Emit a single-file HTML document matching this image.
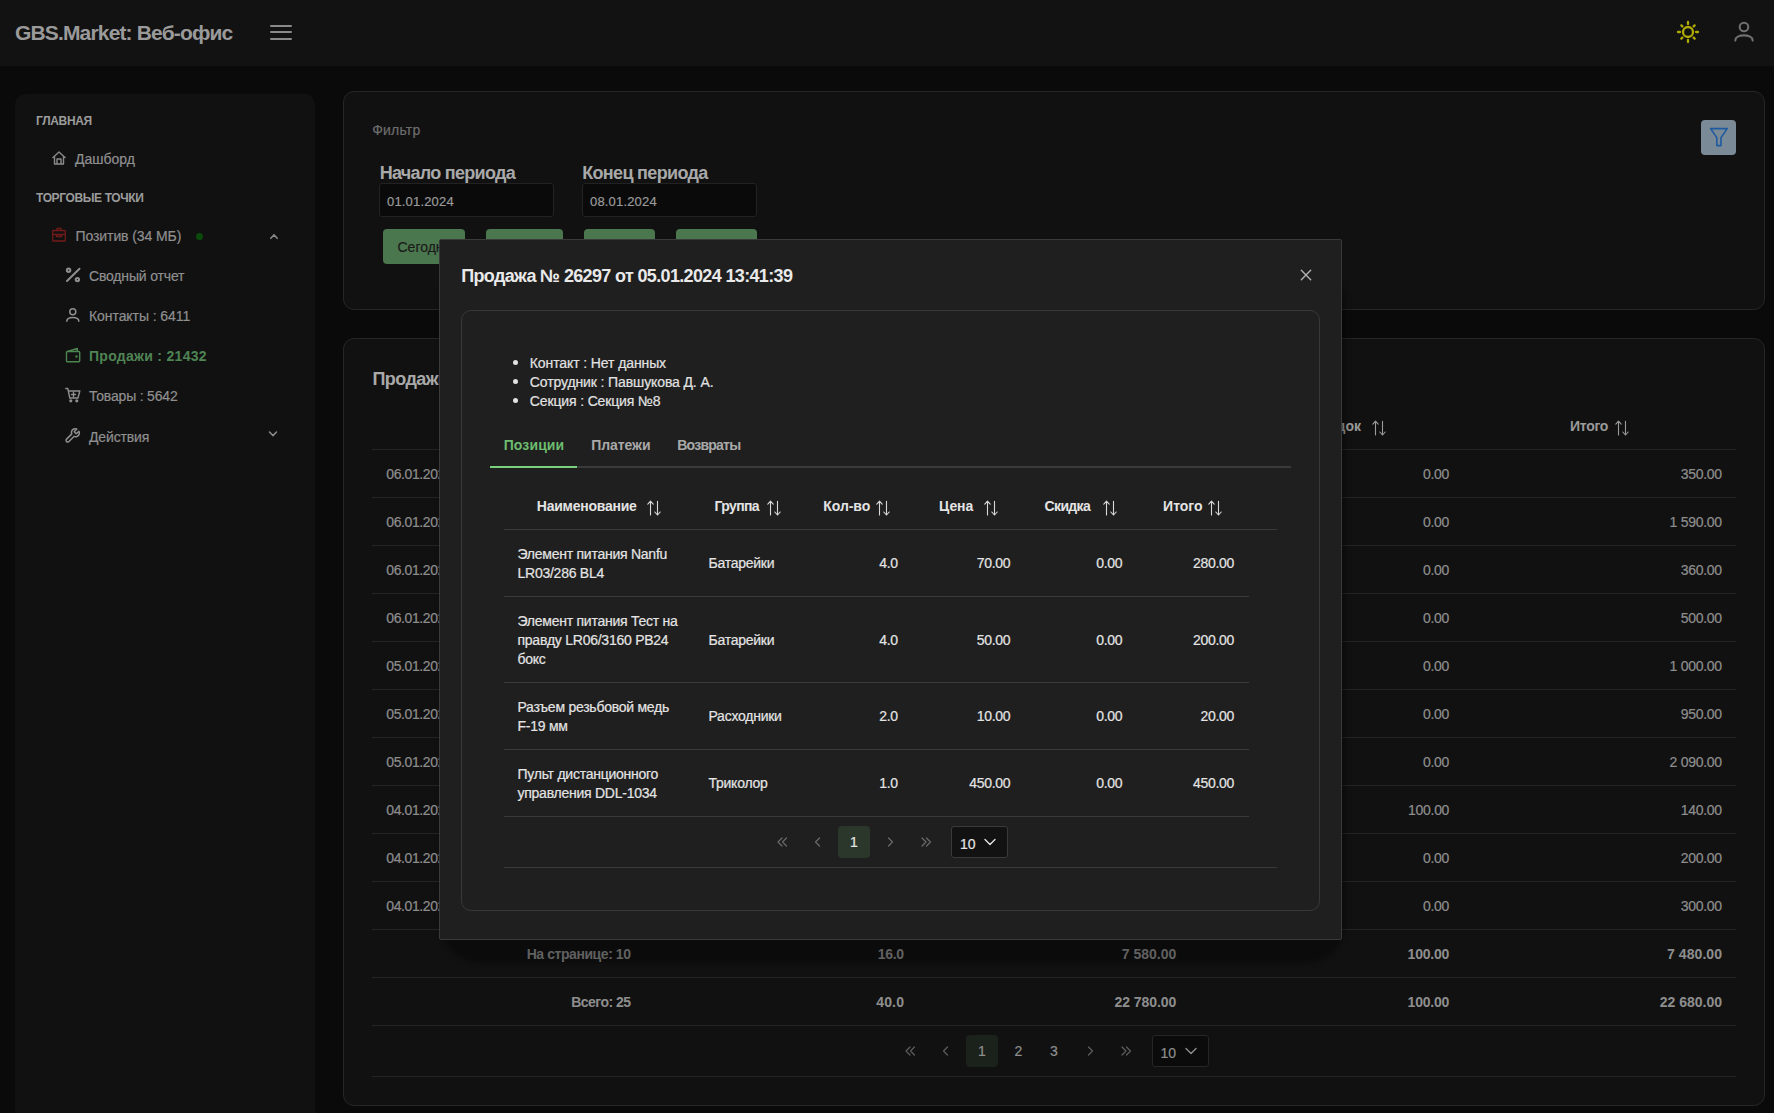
<!DOCTYPE html>
<html><head><meta charset="utf-8"><style>
html,body{margin:0;padding:0;}
body{width:1774px;height:1113px;overflow:hidden;background:#0a0a0a;position:relative;font-family:"Liberation Sans", sans-serif;}
.t{position:absolute;white-space:nowrap;line-height:1;}
.r{-webkit-text-stroke:0.2px currentColor;}
svg{overflow:visible;}
</style></head><body>
<div style="position:absolute;left:0px;top:0px;width:1774px;height:66px;background:#121212;"></div><div class="t" style="top:22.42px;font-size:21px;color:#9a9a9a;font-weight:700;letter-spacing:-0.842px;left:15px;">GBS.Market: Веб-офис</div><div style="position:absolute;left:270px;top:24.5px;width:22px;height:2px;background:#8a8a8a;border-radius:1px;"></div><div style="position:absolute;left:270px;top:31px;width:22px;height:2px;background:#8a8a8a;border-radius:1px;"></div><div style="position:absolute;left:270px;top:37.5px;width:22px;height:2px;background:#8a8a8a;border-radius:1px;"></div><svg style="position:absolute;left:1676px;top:19.7px;" width="24" height="24" viewBox="0 0 24 24" fill="none"><g stroke="#b0ab00" stroke-width="2.3" stroke-linecap="round"><circle cx="12" cy="12" r="5.0"/><line x1="20.00" y1="12.00" x2="22.00" y2="12.00"/><line x1="17.66" y1="17.66" x2="18.65" y2="18.65"/><line x1="12.00" y1="20.00" x2="12.00" y2="22.00"/><line x1="6.34" y1="17.66" x2="5.35" y2="18.65"/><line x1="4.00" y1="12.00" x2="2.00" y2="12.00"/><line x1="6.34" y1="6.34" x2="5.35" y2="5.35"/><line x1="12.00" y1="4.00" x2="12.00" y2="2.00"/><line x1="17.66" y1="6.34" x2="18.65" y2="5.35"/></g></svg><svg style="position:absolute;left:1732px;top:19px;" width="24" height="24" viewBox="0 0 24 24" fill="none"><g stroke="#6f6f6f" stroke-width="2.1" stroke-linecap="round"><circle cx="12" cy="8" r="4.3"/><path d="M3.3 21.6 C3.3 14.6 20.7 14.6 20.7 21.6"/></g></svg><div style="position:absolute;left:15px;top:94px;width:300px;height:1040px;background:#111111;border-radius:10px;"></div><div class="t" style="top:114.84px;font-size:12px;color:#9c9c9c;font-weight:700;letter-spacing:-0.333px;left:36px;">ГЛАВНАЯ</div><div class="t" style="top:191.84px;font-size:12px;color:#9c9c9c;font-weight:700;letter-spacing:-0.385px;left:36px;">ТОРГОВЫЕ ТОЧКИ</div><div class="t r" style="top:151.85px;font-size:14px;color:#8f8f8f;font-weight:400;left:75px;">Дашборд</div><div class="t r" style="top:228.95px;font-size:14px;color:#8f8f8f;font-weight:400;letter-spacing:-0.093px;left:75.5px;">Позитив (34 МБ)</div><div class="t r" style="top:269.25px;font-size:14px;color:#8f8f8f;font-weight:400;letter-spacing:-0.167px;left:89px;">Сводный отчет</div><div class="t r" style="top:309.45px;font-size:14px;color:#8f8f8f;font-weight:400;letter-spacing:-0.071px;left:89px;">Контакты : 6411</div><div class="t" style="top:349.15px;font-size:14px;color:#4f8454;font-weight:700;letter-spacing:0.286px;left:89px;">Продажи : 21432</div><div class="t r" style="top:389.15px;font-size:14px;color:#8f8f8f;font-weight:400;letter-spacing:-0.192px;left:89px;">Товары : 5642</div><div class="t r" style="top:429.65px;font-size:14px;color:#8f8f8f;font-weight:400;letter-spacing:-0.143px;left:89px;">Действия</div><svg style="position:absolute;left:51px;top:150px;" width="16" height="16" viewBox="0 0 16 16" fill="none"><g stroke="#8a8a8a" stroke-width="1.4" stroke-linejoin="round"><path d="M1.5 8 L8 2 L14.5 8 M3.5 6.5 V14 H12.5 V6.5 M6 14 V9 H10 V14"/></g></svg><svg style="position:absolute;left:51px;top:227px;" width="16" height="15" viewBox="0 0 16 15" fill="none"><g stroke="#721a1a" stroke-width="1.3"><rect x="1.7" y="3.5" width="12.6" height="10.5" rx="0.6"/><path d="M6 3.5 V1.3 H10 V3.5 M1.7 7.5 H14.3 M5.5 7.5 V9.5 H10.5 V7.5"/></g></svg><div style="position:absolute;left:196px;top:232.5px;width:7px;height:7px;background:#0a4a0a;border-radius:50%;"></div><svg style="position:absolute;left:266px;top:229px;" width="14" height="12" viewBox="0 0 14 12" fill="none"><path d="M4.8 9.3 L8 6 L11.2 9.3" stroke="#8a8a8a" stroke-width="1.6" stroke-linecap="round"/></svg><svg style="position:absolute;left:65px;top:267px;" width="16" height="16" viewBox="0 0 16 16" fill="none"><g stroke="#8f8f8f" stroke-width="2" stroke-linecap="round"><line x1="2" y1="14" x2="14.5" y2="1.8"/><circle cx="3.6" cy="3.3" r="1.7"/><circle cx="12.4" cy="12.6" r="1.7"/></g></svg><svg style="position:absolute;left:65px;top:307px;" width="16" height="16" viewBox="0 0 16 16" fill="none"><g stroke="#8f8f8f" stroke-width="1.5" stroke-linecap="round"><circle cx="7.8" cy="4.8" r="3"/><path d="M1.8 14.3 C1.8 9.3 13.8 9.3 13.8 14.3"/></g></svg><svg style="position:absolute;left:65px;top:347px;" width="16" height="16" viewBox="0 0 16 16" fill="none"><g stroke="#4d8551" stroke-width="1.4" stroke-linejoin="round"><rect x="1.5" y="4.5" width="13.2" height="10.2" rx="1"/><path d="M2.5 4.5 L12.3 1.5 V4.5"/><circle cx="11.5" cy="9.5" r="0.5" fill="#4d8551"/></g></svg><svg style="position:absolute;left:65px;top:387px;" width="16" height="16" viewBox="0 0 16 16" fill="none"><g stroke="#8f8f8f" stroke-width="1.4" stroke-linejoin="round" stroke-linecap="round"><path d="M0.8 1.5 H2.8 L4.8 11 H13 L14.8 4 H3.5 M8.5 5.5 V9.5 M6.5 7.5 H10.5"/><circle cx="5.8" cy="13.8" r="0.9" fill="#8f8f8f"/><circle cx="11.8" cy="13.8" r="0.9" fill="#8f8f8f"/></g></svg><svg style="position:absolute;left:65px;top:427px;" width="16" height="16" viewBox="0 0 16 16" fill="none"><g stroke="#8f8f8f" stroke-width="1.5" stroke-linejoin="round"><path d="M14 4.2 L11.3 6.8 L9.2 4.7 L11.8 2 C9.8 1.1 7.3 2 6.6 4.2 C6.3 5.2 6.4 6.1 6.8 6.9 L1.6 12.1 C0.9 12.8 0.9 14 1.6 14.6 C2.2 15.2 3.4 15.2 4 14.5 L9.2 9.3 C10 9.7 10.9 9.8 11.9 9.5 C14 8.8 15 6.3 14 4.2 Z"/></g></svg><svg style="position:absolute;left:266px;top:427px;" width="14" height="12" viewBox="0 0 14 12" fill="none"><path d="M3.5 5 L7 8.5 L10.5 5" stroke="#8a8a8a" stroke-width="1.6" stroke-linecap="round"/></svg><div style="position:absolute;left:343px;top:91px;width:1422px;height:219px;background:#111111;border:1px solid #262626;border-radius:11px;box-sizing:border-box;"></div><div class="t r" style="top:123.35px;font-size:14px;color:#6d6d6d;font-weight:400;letter-spacing:0.200px;left:372.2px;">Фильтр</div><div class="t" style="top:163.76px;font-size:18px;color:#a9a9a9;font-weight:700;letter-spacing:-0.723px;left:379.7px;">Начало периода</div><div class="t" style="top:163.76px;font-size:18px;color:#a9a9a9;font-weight:700;letter-spacing:-0.667px;left:582.2px;">Конец периода</div><div style="position:absolute;left:379px;top:183px;width:175px;height:34px;background:#0a0a0a;border:1px solid #222;border-radius:3px;box-sizing:border-box;"></div><div style="position:absolute;left:582px;top:183px;width:175px;height:34px;background:#0a0a0a;border:1px solid #222;border-radius:3px;box-sizing:border-box;"></div><div class="t r" style="top:194.60px;font-size:13px;color:#9a9a9a;font-weight:400;letter-spacing:0.178px;left:387px;">01.01.2024</div><div class="t r" style="top:194.60px;font-size:13px;color:#9a9a9a;font-weight:400;letter-spacing:0.178px;left:590px;">08.01.2024</div><div style="position:absolute;left:383px;top:229px;width:82px;height:35px;background:#4a774d;border-radius:4px;"></div><div style="position:absolute;left:486px;top:229px;width:77px;height:35px;background:#4a774d;border-radius:4px;"></div><div style="position:absolute;left:584px;top:229px;width:71px;height:35px;background:#4a774d;border-radius:4px;"></div><div style="position:absolute;left:676px;top:229px;width:81px;height:35px;background:#4a774d;border-radius:4px;"></div><div class="t r" style="top:240.45px;font-size:14px;color:#1b1b1b;font-weight:400;left:397.5px;">Сегодня</div><div style="position:absolute;left:1701px;top:120px;width:35px;height:35px;background:#7a8a96;border-radius:4px;"></div><svg style="position:absolute;left:1709px;top:127px;" width="20" height="20" viewBox="0 0 20 20" fill="none"><path d="M1.6 1.6 H18.2 L12 10.6 V18.6 H7.8 V10.6 Z" stroke="#1d5aa0" stroke-width="1.6" stroke-linejoin="round"/></svg><div style="position:absolute;left:343px;top:338px;width:1422px;height:768px;background:#111111;border:1px solid #262626;border-radius:11px;box-sizing:border-box;"></div><div class="t" style="top:369.56px;font-size:18px;color:#a9a9a9;font-weight:700;letter-spacing:-0.600px;left:372.5px;">Продажи</div><div class="t" style="top:419.45px;font-size:14px;color:#9a9a9a;font-weight:700;right:413.00px;">...док</div><div class="t" style="top:419.45px;font-size:14px;color:#9a9a9a;font-weight:700;letter-spacing:-0.300px;left:1570px;">Итого</div><svg style="position:absolute;left:1371px;top:420px;" width="15" height="16" viewBox="0 0 15 16" fill="none"><g stroke="#9a9a9a" stroke-width="1.1" stroke-linecap="round" stroke-linejoin="round"><path d="M4.5 15 V1.2 M1.8 4.2 L4.5 1.2 L7.2 4.2 M11.5 1.2 V15 M8.8 12 L11.5 15 L14.2 12"/></g></svg><svg style="position:absolute;left:1614px;top:420px;" width="15" height="16" viewBox="0 0 15 16" fill="none"><g stroke="#9a9a9a" stroke-width="1.1" stroke-linecap="round" stroke-linejoin="round"><path d="M4.5 15 V1.2 M1.8 4.2 L4.5 1.2 L7.2 4.2 M11.5 1.2 V15 M8.8 12 L11.5 15 L14.2 12"/></g></svg><div style="position:absolute;left:372px;top:449px;width:1364px;height:1px;background:#242424;"></div><div style="position:absolute;left:372px;top:497px;width:1364px;height:1px;background:#242424;"></div><div style="position:absolute;left:372px;top:545px;width:1364px;height:1px;background:#242424;"></div><div style="position:absolute;left:372px;top:593px;width:1364px;height:1px;background:#242424;"></div><div style="position:absolute;left:372px;top:641px;width:1364px;height:1px;background:#242424;"></div><div style="position:absolute;left:372px;top:689px;width:1364px;height:1px;background:#242424;"></div><div style="position:absolute;left:372px;top:737px;width:1364px;height:1px;background:#242424;"></div><div style="position:absolute;left:372px;top:785px;width:1364px;height:1px;background:#242424;"></div><div style="position:absolute;left:372px;top:833px;width:1364px;height:1px;background:#242424;"></div><div style="position:absolute;left:372px;top:881px;width:1364px;height:1px;background:#242424;"></div><div style="position:absolute;left:372px;top:929px;width:1364px;height:1px;background:#242424;"></div><div style="position:absolute;left:372px;top:977px;width:1364px;height:1px;background:#242424;"></div><div style="position:absolute;left:372px;top:1025px;width:1364px;height:1px;background:#242424;"></div><div style="position:absolute;left:372px;top:1076px;width:1364px;height:1px;background:#242424;"></div><div class="t r" style="top:467.15px;font-size:14px;color:#8e8e8e;font-weight:400;letter-spacing:-0.400px;left:386.3px;">06.01.2024</div><div class="t r" style="top:467.15px;font-size:14px;color:#8e8e8e;font-weight:400;letter-spacing:-0.300px;right:324.90px;">0.00</div><div class="t r" style="top:467.15px;font-size:14px;color:#8e8e8e;font-weight:400;letter-spacing:-0.300px;right:52.30px;">350.00</div><div class="t r" style="top:515.15px;font-size:14px;color:#8e8e8e;font-weight:400;letter-spacing:-0.400px;left:386.3px;">06.01.2024</div><div class="t r" style="top:515.15px;font-size:14px;color:#8e8e8e;font-weight:400;letter-spacing:-0.300px;right:324.90px;">0.00</div><div class="t r" style="top:515.15px;font-size:14px;color:#8e8e8e;font-weight:400;letter-spacing:-0.300px;right:52.30px;">1 590.00</div><div class="t r" style="top:563.15px;font-size:14px;color:#8e8e8e;font-weight:400;letter-spacing:-0.400px;left:386.3px;">06.01.2024</div><div class="t r" style="top:563.15px;font-size:14px;color:#8e8e8e;font-weight:400;letter-spacing:-0.300px;right:324.90px;">0.00</div><div class="t r" style="top:563.15px;font-size:14px;color:#8e8e8e;font-weight:400;letter-spacing:-0.300px;right:52.30px;">360.00</div><div class="t r" style="top:611.15px;font-size:14px;color:#8e8e8e;font-weight:400;letter-spacing:-0.400px;left:386.3px;">06.01.2024</div><div class="t r" style="top:611.15px;font-size:14px;color:#8e8e8e;font-weight:400;letter-spacing:-0.300px;right:324.90px;">0.00</div><div class="t r" style="top:611.15px;font-size:14px;color:#8e8e8e;font-weight:400;letter-spacing:-0.300px;right:52.30px;">500.00</div><div class="t r" style="top:659.15px;font-size:14px;color:#8e8e8e;font-weight:400;letter-spacing:-0.400px;left:386.3px;">05.01.2024</div><div class="t r" style="top:659.15px;font-size:14px;color:#8e8e8e;font-weight:400;letter-spacing:-0.300px;right:324.90px;">0.00</div><div class="t r" style="top:659.15px;font-size:14px;color:#8e8e8e;font-weight:400;letter-spacing:-0.300px;right:52.30px;">1 000.00</div><div class="t r" style="top:707.15px;font-size:14px;color:#8e8e8e;font-weight:400;letter-spacing:-0.400px;left:386.3px;">05.01.2024</div><div class="t r" style="top:707.15px;font-size:14px;color:#8e8e8e;font-weight:400;letter-spacing:-0.300px;right:324.90px;">0.00</div><div class="t r" style="top:707.15px;font-size:14px;color:#8e8e8e;font-weight:400;letter-spacing:-0.300px;right:52.30px;">950.00</div><div class="t r" style="top:755.15px;font-size:14px;color:#8e8e8e;font-weight:400;letter-spacing:-0.400px;left:386.3px;">05.01.2024</div><div class="t r" style="top:755.15px;font-size:14px;color:#8e8e8e;font-weight:400;letter-spacing:-0.300px;right:324.90px;">0.00</div><div class="t r" style="top:755.15px;font-size:14px;color:#8e8e8e;font-weight:400;letter-spacing:-0.300px;right:52.30px;">2 090.00</div><div class="t r" style="top:803.15px;font-size:14px;color:#8e8e8e;font-weight:400;letter-spacing:-0.400px;left:386.3px;">04.01.2024</div><div class="t r" style="top:803.15px;font-size:14px;color:#8e8e8e;font-weight:400;letter-spacing:-0.300px;right:324.90px;">100.00</div><div class="t r" style="top:803.15px;font-size:14px;color:#8e8e8e;font-weight:400;letter-spacing:-0.300px;right:52.30px;">140.00</div><div class="t r" style="top:851.15px;font-size:14px;color:#8e8e8e;font-weight:400;letter-spacing:-0.400px;left:386.3px;">04.01.2024</div><div class="t r" style="top:851.15px;font-size:14px;color:#8e8e8e;font-weight:400;letter-spacing:-0.300px;right:324.90px;">0.00</div><div class="t r" style="top:851.15px;font-size:14px;color:#8e8e8e;font-weight:400;letter-spacing:-0.300px;right:52.30px;">200.00</div><div class="t r" style="top:899.15px;font-size:14px;color:#8e8e8e;font-weight:400;letter-spacing:-0.400px;left:386.3px;">04.01.2024</div><div class="t r" style="top:899.15px;font-size:14px;color:#8e8e8e;font-weight:400;letter-spacing:-0.300px;right:324.90px;">0.00</div><div class="t r" style="top:899.15px;font-size:14px;color:#8e8e8e;font-weight:400;letter-spacing:-0.300px;right:52.30px;">300.00</div><div class="t" style="top:946.65px;font-size:14px;color:#8e8e8e;font-weight:700;letter-spacing:-0.429px;right:1143.43px;">На странице: 10</div><div class="t" style="top:946.65px;font-size:14px;color:#8e8e8e;font-weight:700;letter-spacing:-0.333px;right:870.33px;">16.0</div><div class="t" style="top:946.65px;font-size:14px;color:#8e8e8e;font-weight:700;right:597.70px;">7 580.00</div><div class="t" style="top:946.65px;font-size:14px;color:#8e8e8e;font-weight:700;letter-spacing:-0.200px;right:324.80px;">100.00</div><div class="t" style="top:946.65px;font-size:14px;color:#8e8e8e;font-weight:700;letter-spacing:0.071px;right:51.93px;">7 480.00</div><div class="t" style="top:994.65px;font-size:14px;color:#8e8e8e;font-weight:700;letter-spacing:-0.537px;right:1143.54px;">Всего: 25</div><div class="t" style="top:994.65px;font-size:14px;color:#8e8e8e;font-weight:700;letter-spacing:0.200px;right:869.80px;">40.0</div><div class="t" style="top:994.65px;font-size:14px;color:#8e8e8e;font-weight:700;letter-spacing:-0.050px;right:597.75px;">22 780.00</div><div class="t" style="top:994.65px;font-size:14px;color:#8e8e8e;font-weight:700;letter-spacing:-0.200px;right:324.80px;">100.00</div><div class="t" style="top:994.65px;font-size:14px;color:#8e8e8e;font-weight:700;right:52.00px;">22 680.00</div><svg style="position:absolute;left:903px;top:1044px;" width="14" height="14" viewBox="0 0 14 14" fill="none"><path d="M7 3 L3 7 L7 11 M11.5 3 L7.5 7 L11.5 11" stroke="#5e5e5e" stroke-width="1.2" stroke-linecap="round" stroke-linejoin="round"/></svg><svg style="position:absolute;left:939px;top:1044px;" width="14" height="14" viewBox="0 0 14 14" fill="none"><path d="M8.5 3 L4.5 7 L8.5 11" stroke="#5e5e5e" stroke-width="1.2" stroke-linecap="round" stroke-linejoin="round"/></svg><div style="position:absolute;left:966px;top:1035px;width:32px;height:32px;background:#1b211b;border-radius:4px;"></div><div class="t r" style="top:1044.15px;font-size:14px;color:#8e8e8e;font-weight:400;left:982px;transform:translateX(-50%);">1</div><div class="t r" style="top:1044.15px;font-size:14px;color:#8e8e8e;font-weight:400;left:1018.5px;transform:translateX(-50%);">2</div><div class="t r" style="top:1044.15px;font-size:14px;color:#8e8e8e;font-weight:400;left:1054px;transform:translateX(-50%);">3</div><svg style="position:absolute;left:1082.5px;top:1044px;" width="14" height="14" viewBox="0 0 14 14" fill="none"><path d="M5.5 3 L9.5 7 L5.5 11" stroke="#5e5e5e" stroke-width="1.2" stroke-linecap="round" stroke-linejoin="round"/></svg><svg style="position:absolute;left:1118.5px;top:1044px;" width="14" height="14" viewBox="0 0 14 14" fill="none"><path d="M3 3 L7 7 L3 11 M7.5 3 L11.5 7 L7.5 11" stroke="#5e5e5e" stroke-width="1.2" stroke-linecap="round" stroke-linejoin="round"/></svg><div style="position:absolute;left:1151.5px;top:1035px;width:57px;height:32px;background:#0b0b0b;border:1px solid #262626;border-radius:3px;box-sizing:border-box;"></div><div class="t r" style="top:1045.65px;font-size:14px;color:#8e8e8e;font-weight:400;left:1160.5px;">10</div><svg style="position:absolute;left:1183.5px;top:1044px;" width="14" height="14" viewBox="0 0 14 14" fill="none"><path d="M2 4.5 L7 9.5 L12 4.5" stroke="#8e8e8e" stroke-width="1.4" stroke-linecap="round" stroke-linejoin="round"/></svg><div style="position:absolute;left:440px;top:262px;width:906px;height:701px;background:rgba(0,0,0,0.32);border-radius:40px;filter:blur(2.5px);"></div><div style="position:absolute;left:439px;top:239px;width:903px;height:701px;background:#1f1f1f;border:1px solid #3a3a3a;border-radius:2px;box-sizing:border-box;"></div><div class="t" style="top:266.76px;font-size:18px;color:#e9e9e9;font-weight:700;letter-spacing:-0.649px;left:461.2px;">Продажа № 26297 от 05.01.2024 13:41:39</div><svg style="position:absolute;left:1299px;top:268px;" width="14" height="14" viewBox="0 0 14 14" fill="none"><path d="M2.3 2.3 L11.7 11.7 M11.7 2.3 L2.3 11.7" stroke="#b5b5b5" stroke-width="1.35" stroke-linecap="round"/></svg><div style="position:absolute;left:461px;top:310px;width:859px;height:601px;border:1px solid #383838;border-radius:10px;box-sizing:border-box;"></div><div style="position:absolute;left:513px;top:360.1px;width:5px;height:5px;background:#e2e2e2;border-radius:50%;"></div><div class="t r" style="top:356.25px;font-size:14px;color:#e2e2e2;font-weight:400;letter-spacing:-0.105px;left:529.8px;">Контакт : Нет данных</div><div style="position:absolute;left:513px;top:379.0px;width:5px;height:5px;background:#e2e2e2;border-radius:50%;"></div><div class="t r" style="top:375.15px;font-size:14px;color:#e2e2e2;font-weight:400;letter-spacing:-0.115px;left:529.8px;">Сотрудник : Павшукова Д. А.</div><div style="position:absolute;left:513px;top:397.90000000000003px;width:5px;height:5px;background:#e2e2e2;border-radius:50%;"></div><div class="t r" style="top:394.05px;font-size:14px;color:#e2e2e2;font-weight:400;letter-spacing:-0.141px;left:529.8px;">Секция : Секция №8</div><div class="t" style="top:438.15px;font-size:14px;color:#6dbc70;font-weight:700;letter-spacing:0.117px;left:503.7px;">Позиции</div><div class="t" style="top:438.15px;font-size:14px;color:#a9a9a9;font-weight:700;letter-spacing:-0.083px;left:591.3px;">Платежи</div><div class="t" style="top:438.15px;font-size:14px;color:#a9a9a9;font-weight:700;letter-spacing:-0.743px;left:677.2px;">Возвраты</div><div style="position:absolute;left:490px;top:466px;width:801px;height:2px;background:#3a3a3a;"></div><div style="position:absolute;left:490px;top:466px;width:87px;height:2px;background:#7bd07e;"></div><div class="t" style="top:499.45px;font-size:14px;color:#e4e4e4;font-weight:700;letter-spacing:-0.236px;left:536.8px;">Наименование</div><div class="t" style="top:499.45px;font-size:14px;color:#e4e4e4;font-weight:700;letter-spacing:-0.600px;left:714.4px;">Группа</div><div class="t" style="top:499.45px;font-size:14px;color:#e4e4e4;font-weight:700;letter-spacing:-0.060px;left:823.3px;">Кол-во</div><div class="t" style="top:499.45px;font-size:14px;color:#e4e4e4;font-weight:700;letter-spacing:-0.100px;left:939.1px;">Цена</div><div class="t" style="top:499.45px;font-size:14px;color:#e4e4e4;font-weight:700;letter-spacing:-0.660px;left:1044.6px;">Скидка</div><div class="t" style="top:499.45px;font-size:14px;color:#e4e4e4;font-weight:700;letter-spacing:-0.025px;left:1163.1px;">Итого</div><svg style="position:absolute;left:646px;top:500px;" width="15" height="16" viewBox="0 0 15 16" fill="none"><g stroke="#d8d8d8" stroke-width="1.1" stroke-linecap="round" stroke-linejoin="round"><path d="M4.5 15 V1.2 M1.8 4.2 L4.5 1.2 L7.2 4.2 M11.5 1.2 V15 M8.8 12 L11.5 15 L14.2 12"/></g></svg><svg style="position:absolute;left:766px;top:500px;" width="15" height="16" viewBox="0 0 15 16" fill="none"><g stroke="#d8d8d8" stroke-width="1.1" stroke-linecap="round" stroke-linejoin="round"><path d="M4.5 15 V1.2 M1.8 4.2 L4.5 1.2 L7.2 4.2 M11.5 1.2 V15 M8.8 12 L11.5 15 L14.2 12"/></g></svg><svg style="position:absolute;left:875px;top:500px;" width="15" height="16" viewBox="0 0 15 16" fill="none"><g stroke="#d8d8d8" stroke-width="1.1" stroke-linecap="round" stroke-linejoin="round"><path d="M4.5 15 V1.2 M1.8 4.2 L4.5 1.2 L7.2 4.2 M11.5 1.2 V15 M8.8 12 L11.5 15 L14.2 12"/></g></svg><svg style="position:absolute;left:983px;top:500px;" width="15" height="16" viewBox="0 0 15 16" fill="none"><g stroke="#d8d8d8" stroke-width="1.1" stroke-linecap="round" stroke-linejoin="round"><path d="M4.5 15 V1.2 M1.8 4.2 L4.5 1.2 L7.2 4.2 M11.5 1.2 V15 M8.8 12 L11.5 15 L14.2 12"/></g></svg><svg style="position:absolute;left:1102px;top:500px;" width="15" height="16" viewBox="0 0 15 16" fill="none"><g stroke="#d8d8d8" stroke-width="1.1" stroke-linecap="round" stroke-linejoin="round"><path d="M4.5 15 V1.2 M1.8 4.2 L4.5 1.2 L7.2 4.2 M11.5 1.2 V15 M8.8 12 L11.5 15 L14.2 12"/></g></svg><svg style="position:absolute;left:1207px;top:500px;" width="15" height="16" viewBox="0 0 15 16" fill="none"><g stroke="#d8d8d8" stroke-width="1.1" stroke-linecap="round" stroke-linejoin="round"><path d="M4.5 15 V1.2 M1.8 4.2 L4.5 1.2 L7.2 4.2 M11.5 1.2 V15 M8.8 12 L11.5 15 L14.2 12"/></g></svg><div style="position:absolute;left:504px;top:529px;width:773px;height:1px;background:#3a3a3a;"></div><div class="t r" style="top:546.95px;font-size:14px;color:#e4e4e4;font-weight:400;letter-spacing:-0.250px;left:517.5px;">Элемент питания Nanfu</div><div class="t r" style="top:565.95px;font-size:14px;color:#e4e4e4;font-weight:400;letter-spacing:-0.250px;left:517.5px;">LR03/286 BL4</div><div class="t r" style="top:556.05px;font-size:14px;color:#e4e4e4;font-weight:400;letter-spacing:-0.250px;left:708.5px;">Батарейки</div><div class="t r" style="top:556.05px;font-size:14px;color:#e4e4e4;font-weight:400;letter-spacing:-0.300px;right:876.30px;">4.0</div><div class="t r" style="top:556.05px;font-size:14px;color:#e4e4e4;font-weight:400;letter-spacing:-0.300px;right:763.80px;">70.00</div><div class="t r" style="top:556.05px;font-size:14px;color:#e4e4e4;font-weight:400;letter-spacing:-0.300px;right:651.80px;">0.00</div><div class="t r" style="top:556.05px;font-size:14px;color:#e4e4e4;font-weight:400;letter-spacing:-0.300px;right:540.00px;">280.00</div><div style="position:absolute;left:504px;top:596px;width:745px;height:1px;background:#3a3a3a;"></div><div class="t r" style="top:613.95px;font-size:14px;color:#e4e4e4;font-weight:400;letter-spacing:-0.250px;left:517.5px;">Элемент питания Тест на</div><div class="t r" style="top:632.95px;font-size:14px;color:#e4e4e4;font-weight:400;letter-spacing:-0.250px;left:517.5px;">правду LR06/3160 PB24</div><div class="t r" style="top:651.95px;font-size:14px;color:#e4e4e4;font-weight:400;letter-spacing:-0.250px;left:517.5px;">бокс</div><div class="t r" style="top:632.55px;font-size:14px;color:#e4e4e4;font-weight:400;letter-spacing:-0.250px;left:708.5px;">Батарейки</div><div class="t r" style="top:632.55px;font-size:14px;color:#e4e4e4;font-weight:400;letter-spacing:-0.300px;right:876.30px;">4.0</div><div class="t r" style="top:632.55px;font-size:14px;color:#e4e4e4;font-weight:400;letter-spacing:-0.300px;right:763.80px;">50.00</div><div class="t r" style="top:632.55px;font-size:14px;color:#e4e4e4;font-weight:400;letter-spacing:-0.300px;right:651.80px;">0.00</div><div class="t r" style="top:632.55px;font-size:14px;color:#e4e4e4;font-weight:400;letter-spacing:-0.300px;right:540.00px;">200.00</div><div style="position:absolute;left:504px;top:682px;width:745px;height:1px;background:#3a3a3a;"></div><div class="t r" style="top:699.95px;font-size:14px;color:#e4e4e4;font-weight:400;letter-spacing:-0.250px;left:517.5px;">Разъем резьбовой медь</div><div class="t r" style="top:718.95px;font-size:14px;color:#e4e4e4;font-weight:400;letter-spacing:-0.250px;left:517.5px;">F-19 мм</div><div class="t r" style="top:709.05px;font-size:14px;color:#e4e4e4;font-weight:400;letter-spacing:-0.250px;left:708.5px;">Расходники</div><div class="t r" style="top:709.05px;font-size:14px;color:#e4e4e4;font-weight:400;letter-spacing:-0.300px;right:876.30px;">2.0</div><div class="t r" style="top:709.05px;font-size:14px;color:#e4e4e4;font-weight:400;letter-spacing:-0.300px;right:763.80px;">10.00</div><div class="t r" style="top:709.05px;font-size:14px;color:#e4e4e4;font-weight:400;letter-spacing:-0.300px;right:651.80px;">0.00</div><div class="t r" style="top:709.05px;font-size:14px;color:#e4e4e4;font-weight:400;letter-spacing:-0.300px;right:540.00px;">20.00</div><div style="position:absolute;left:504px;top:749px;width:745px;height:1px;background:#3a3a3a;"></div><div class="t r" style="top:766.95px;font-size:14px;color:#e4e4e4;font-weight:400;letter-spacing:-0.250px;left:517.5px;">Пульт дистанционного</div><div class="t r" style="top:785.95px;font-size:14px;color:#e4e4e4;font-weight:400;letter-spacing:-0.250px;left:517.5px;">управления DDL-1034</div><div class="t r" style="top:776.05px;font-size:14px;color:#e4e4e4;font-weight:400;letter-spacing:-0.250px;left:708.5px;">Триколор</div><div class="t r" style="top:776.05px;font-size:14px;color:#e4e4e4;font-weight:400;letter-spacing:-0.300px;right:876.30px;">1.0</div><div class="t r" style="top:776.05px;font-size:14px;color:#e4e4e4;font-weight:400;letter-spacing:-0.300px;right:763.80px;">450.00</div><div class="t r" style="top:776.05px;font-size:14px;color:#e4e4e4;font-weight:400;letter-spacing:-0.300px;right:651.80px;">0.00</div><div class="t r" style="top:776.05px;font-size:14px;color:#e4e4e4;font-weight:400;letter-spacing:-0.300px;right:540.00px;">450.00</div><div style="position:absolute;left:504px;top:816px;width:745px;height:1px;background:#3a3a3a;"></div><svg style="position:absolute;left:775px;top:835px;" width="14" height="14" viewBox="0 0 14 14" fill="none"><path d="M7 3 L3 7 L7 11 M11.5 3 L7.5 7 L11.5 11" stroke="#6a6a6a" stroke-width="1.2" stroke-linecap="round" stroke-linejoin="round"/></svg><svg style="position:absolute;left:811px;top:835px;" width="14" height="14" viewBox="0 0 14 14" fill="none"><path d="M8.5 3 L4.5 7 L8.5 11" stroke="#6a6a6a" stroke-width="1.2" stroke-linecap="round" stroke-linejoin="round"/></svg><div style="position:absolute;left:838px;top:826px;width:32px;height:32px;background:#2c372c;border-radius:4px;"></div><div class="t r" style="top:835.15px;font-size:14px;color:#e4e4e4;font-weight:400;left:854px;transform:translateX(-50%);">1</div><svg style="position:absolute;left:883px;top:835px;" width="14" height="14" viewBox="0 0 14 14" fill="none"><path d="M5.5 3 L9.5 7 L5.5 11" stroke="#6a6a6a" stroke-width="1.2" stroke-linecap="round" stroke-linejoin="round"/></svg><svg style="position:absolute;left:919px;top:835px;" width="14" height="14" viewBox="0 0 14 14" fill="none"><path d="M3 3 L7 7 L3 11 M7.5 3 L11.5 7 L7.5 11" stroke="#6a6a6a" stroke-width="1.2" stroke-linecap="round" stroke-linejoin="round"/></svg><div style="position:absolute;left:951px;top:826px;width:57px;height:32px;background:#121212;border:1px solid #3a3a3a;border-radius:3px;box-sizing:border-box;"></div><div class="t r" style="top:836.65px;font-size:14px;color:#e4e4e4;font-weight:400;left:960px;">10</div><svg style="position:absolute;left:983px;top:835px;" width="14" height="14" viewBox="0 0 14 14" fill="none"><path d="M2 4.5 L7 9.5 L12 4.5" stroke="#e4e4e4" stroke-width="1.4" stroke-linecap="round" stroke-linejoin="round"/></svg><div style="position:absolute;left:504px;top:867px;width:773px;height:1px;background:#3a3a3a;"></div>
</body></html>
